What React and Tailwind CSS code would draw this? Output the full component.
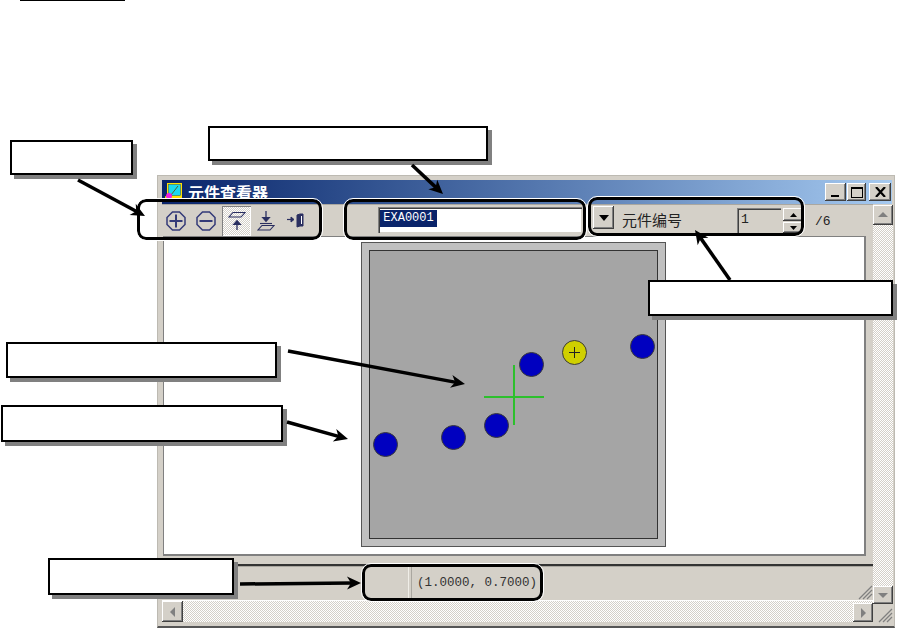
const raised = "bg-[#d4d0c8] shadow-[inset_-1px_-1px_0_#404040,inset_1px_1px_0_#fff,inset_-2px_-2px_0_#808080,inset_2px_2px_0_#d4d0c8]";
const dither = "bg-[repeating-conic-gradient(#d4d0c8_0_25%,#ffffff_0_50%)] bg-[length:2px_2px]";

function Callout({ cls }) {
  return <div className={"absolute bg-white border-2 border-black shadow-[4px_4px_0_#808080] " + cls} />;
}
function Ring({ cls }) {
  return <div className={"absolute rounded-[9px] border-[3px] border-black outline outline-1 outline-white " + cls} />;
}
function Dot({ x, y, color = "bg-[#0000c0]", children }) {
  return (
    <div
      className={"absolute w-[25px] h-[25px] rounded-full border border-[#3a3a3a] flex items-center justify-center " + color}
      style={{ left: x - 361 - 13, top: y - 242 - 13 }}
    >
      {children}
    </div>
  );
}
function Arrows() {
  const arrow = [
    [78, 180, 145, 216],
    [412, 165, 443, 194],
    [730, 280, 695, 230],
    [288, 351, 465, 384],
    [287, 422, 348, 439],
    [240, 584, 361, 583],
  ];
  return (
    <svg className="absolute left-0 top-0 pointer-events-none" width="902" height="630">
      {arrow.map(([a, b, c, d], i) => {
        const ang = Math.atan2(d - b, c - a);
        const deg = (ang * 180) / Math.PI;
        const len = Math.hypot(c - a, d - b);
        return (
          <g key={i} transform={`translate(${a} ${b}) rotate(${deg})`}>
            <line x1="0" y1="0" x2={len - 9} y2="0" stroke="#000" strokeWidth="3.500" />
            <path d={`M${len} 0 L${len - 14} -6.500 L${len - 10} 0 L${len - 14} 6.500 Z`} fill="#000" />
          </g>
        );
      })}
    </svg>
  );
}
function ZoomIcon({ minus }) {
  return (
    <svg width="20" height="20" viewBox="0 0 20 20" fill="none" stroke="#333a78" strokeWidth="1.500">
      <path d="M6.500 1h7L19 6.500v7L13.500 19h-7L1 13.500v-7z" />
      <path d="M3.500 10h13" strokeWidth="2" />
      {!minus && <path d="M10 3.500v13" strokeWidth="2" />}
    </svg>
  );
}
function UpIcon() {
  return (
    <svg width="18" height="22" viewBox="0 0 18 22" fill="none" stroke="#2a2f60" strokeWidth="1.100">
      <path d="M5 2.500h12L13 7H1z" />
      <path d="M9 11v9" strokeWidth="1.300" />
      <path d="M5.500 14.500L9 10.500l3.500 4z" fill="#2a2f60" />
    </svg>
  );
}
function DownIcon() {
  return (
    <svg width="18" height="22" viewBox="0 0 18 22" fill="none" stroke="#2a2f60" strokeWidth="1.100">
      <path d="M5 15.500h12L13 20H1z" />
      <path d="M9 1v10" strokeWidth="1.300" />
      <path d="M5.500 7.500L9 11.500 12.500 7.500z" fill="#2a2f60" />
      <path d="M3 13.500h12" />
    </svg>
  );
}
function ExitIcon() {
  return (
    <svg width="18" height="16" viewBox="0 0 18 16" fill="none" stroke="#2a2f60">
      <path d="M0 6.500h6" strokeWidth="1.200" />
      <path d="M4 4l3 2.500L4 9z" fill="#2a2f60" />
      <path d="M10 2l3-1h3v12h-3l-3 1z" fill="#2a2f60" />
      <path d="M14 3h1v8h-1z" fill="#fff" stroke="none" />
    </svg>
  );
}
function AppIcon() {
  return (
    <svg width="18" height="19" viewBox="0 0 18 19">
      <rect x="2" y="0" width="15" height="15" fill="#ffe000" />
      <rect x="3.500" y="1.500" width="12" height="11" fill="#19d8f0" stroke="#205060" strokeWidth="0.500" />
      <path d="M6 12L13 3" stroke="#506030" strokeWidth="1" />
      <rect x="0" y="13" width="16" height="6" rx="1" fill="#ffe000" />
      <circle cx="4" cy="13" r="3" fill="#f020e0" />
      <path d="M9 16.500h5" stroke="#000" />
    </svg>
  );
}
function Grip({ cls }) {
  return (
    <svg className={cls} width="15" height="15" viewBox="0 0 15 15" stroke="#808080" strokeWidth="1.300">
      <path d="M14 1L1 14M14 5L5 14M14 9L9 14" />
    </svg>
  );
}
function ArrowBtn({ cls, d }) {
  return (
    <div className={"flex items-center justify-center shrink-0 " + raised + " " + cls}>
      <svg width="10" height="10" viewBox="0 0 10 10"><path d={d} fill="#808080" /></svg>
    </div>
  );
}
function CapBtn({ w, children }) {
  return <div className={"h-[18px] flex items-center justify-center " + w + " " + raised}>{children}</div>;
}

export default function App() {
  return (
    <div className="relative w-[902px] h-[630px] bg-white overflow-hidden pl-[157px] pt-[175px] font-['Liberation_Sans',sans-serif]">
      <div className="absolute left-[20px] top-0 w-[105px] h-[1px] bg-black" />

      {/* window */}
      <div className="w-[738px] h-[453px] bg-[#d4d0c8] border border-[#bdbab2] border-b-2 border-b-[#555] pl-[4px] pr-[1px] pt-[4px] flex flex-col">
        <div className="h-[24px] shrink-0 flex items-center mr-[1px] pl-[3px] bg-gradient-to-r from-[#0a246a] to-[#a6caf0]">
          <AppIcon />
          <span className="ml-[5px] text-white font-bold text-[16px] leading-[20px] font-['Noto_Sans_CJK_SC',sans-serif]">元件查看器</span>
          <div className="ml-auto flex items-center pr-[1px]">
            <CapBtn w="w-[21px]"><div className="w-[8px] h-[2px] bg-black mt-[8px] -ml-[2px]" /></CapBtn>
            <div className="ml-[1px]">
              <CapBtn w="w-[19px]"><div className="w-[12px] h-[11px] border border-black border-t-2" /></CapBtn>
            </div>
            <div className="ml-[3px]">
              <CapBtn w="w-[22px]">
                <svg width="11" height="10" viewBox="0 0 11 10" stroke="#000" strokeWidth="2.200"><path d="M1 0l9 10M10 0L1 10" /></svg>
              </CapBtn>
            </div>
          </div>
        </div>

        <div className="flex-1 flex min-h-0">
          <div className="w-[711px] flex flex-col relative">
            {/* toolbar */}
            <div className="h-[32px] shrink-0 flex items-center relative border-t border-t-[#aaa7a0]">
              <div className="w-[61px] flex items-center pl-[4px] gap-[10px]">
                <ZoomIcon />
                <ZoomIcon minus />
              </div>
              <div className={"w-[29px] h-[30px] flex items-center justify-center -ml-[1px] shadow-[inset_1px_1px_0_#808080,inset_-1px_-1px_0_#fff] " + dither}>
                <UpIcon />
              </div>
              <div className="w-[30px] flex justify-center"><DownIcon /></div>
              <div className="w-[30px] flex justify-center"><ExitIcon /></div>

              <div className="absolute left-[216px] top-[2px] w-[204px] h-[26px] bg-white shadow-[inset_1px_1px_0_#808080,inset_2px_2px_0_#404040,inset_-1px_-1px_0_#d4d0c8] pl-[2px] pt-[3px]">
                <span className="block w-[57px] h-[17px] bg-[#0a246a] text-white text-[12px] leading-[17px] text-center font-['Liberation_Mono',monospace]">EXA0001</span>
              </div>

              <div className={"absolute left-[431px] top-[1px] w-[21px] h-[23px] flex items-center justify-center " + raised}>
                <svg width="10" height="6" viewBox="0 0 10 6"><path d="M0 0h10L5 6z" fill="#000" /></svg>
              </div>
              <span className="absolute left-[460px] top-[5px] text-[15px] leading-[20px] text-[#222] font-['Noto_Sans_CJK_SC',sans-serif]">元件编号</span>
              <div className="absolute left-[575px] top-[3px] w-[44px] h-[25px] bg-[#d4d0c8] shadow-[inset_1px_1px_0_#808080,inset_2px_2px_0_#404040] pl-[4px] pt-[3px] text-[13px] leading-[18px] text-[#222] font-['Liberation_Mono',monospace]">1</div>
              <div className="absolute left-[621px] top-[3px] w-[20px] flex flex-col gap-[1px]">
                <div className={"h-[13px] flex items-center justify-center " + raised}>
                  <svg width="7" height="4" viewBox="0 0 7 4"><path d="M0 4h7L3.500 0z" fill="#000" /></svg>
                </div>
                <div className={"h-[11px] flex items-center justify-center " + raised}>
                  <svg width="7" height="4" viewBox="0 0 7 4"><path d="M0 0h7L3.500 4z" fill="#000" /></svg>
                </div>
              </div>
              <span className="absolute left-[653px] top-[9px] text-[13px] leading-[16px] text-[#222] font-['Liberation_Mono',monospace]">/6</span>
            </div>

            {/* client area */}
            <div className="h-[320px] shrink-0 ml-[1px] w-[703px] bg-white border-l border-t border-b-2 border-r-2 border-[#808080] relative pl-[197px] pt-[5px]">
              <div className="relative w-[305px] h-[305px] border border-[#555] bg-[#c0c0c0] p-[7px]">
                <div className="w-full h-full border border-[#333] bg-[#a5a5a5]" />
                <div className="absolute left-[122px] top-[153px] w-[60px] h-[2px] bg-[#2cc02c]" />
                <div className="absolute left-[151px] top-[122px] w-[2px] h-[60px] bg-[#2cc02c]" />
                <Dot x={385} y={444} />
                <Dot x={453} y={437} />
                <Dot x={496} y={425} />
                <Dot x={531} y={364} />
                <Dot x={642} y={346} />
                <Dot x={574} y={352} color="bg-[#d0d000]">
                  <svg width="11" height="11" viewBox="0 0 11 11" stroke="#222" strokeWidth="1"><path d="M5.500 0v11M0 5.500h11" /></svg>
                </Dot>
              </div>
            </div>

            <div className="h-[10px] shrink-0 border-b-2 border-b-[#333]" />

            {/* status bar */}
            <div className="h-[34px] shrink-0 relative flex border-t border-t-[#aaa7a0]">
              <div className="w-[246px] shrink-0" />
              <div className="w-[4px] shrink-0 border-l border-[#f0eee8] border-r border-r-[#aaa7a0]" />
              <span className="pl-[5px] pt-[7px] text-[12.500px] leading-[18px] text-[#333] whitespace-pre font-['Liberation_Mono',monospace]">(1.0000, 0.7000)</span>
              <Grip cls="absolute right-0 bottom-0" />
            </div>

            {/* h scrollbar */}
            <div className={"h-[22px] shrink-0 flex items-stretch border-t border-t-white " + dither}>
              <ArrowBtn cls="w-[21px]" d="M7 0v10L2 5z" />
              <div className="flex-1" />
              <ArrowBtn cls="w-[20px] mt-[2px]" d="M3 0v10l5-5z" />
            </div>
          </div>

          {/* v scrollbar */}
          <div className="w-[20px] flex flex-col pt-[1px]">
            <ArrowBtn cls="h-[20px]" d="M5 2L0 7h10z" />
            <div className={"flex-1 " + dither} />
            <ArrowBtn cls="h-[18px]" d="M0 3h10L5 8z" />
            <div className="h-[22px] shrink-0 flex items-end justify-end pb-[3px]">
              <Grip />
            </div>
          </div>
        </div>
      </div>

      {/* annotations */}
      <Callout cls="left-[10px] top-[140px] w-[123px] h-[35px]" />
      <Callout cls="left-[208px] top-[126px] w-[280px] h-[35px]" />
      <Callout cls="left-[648px] top-[280px] w-[245px] h-[36px]" />
      <Callout cls="left-[6px] top-[342px] w-[271px] h-[36px]" />
      <Callout cls="left-[1px] top-[405px] w-[282px] h-[37px]" />
      <Callout cls="left-[48px] top-[558px] w-[186px] h-[37px]" />
      <Ring cls="left-[137px] top-[199px] w-[185px] h-[41px]" />
      <Ring cls="left-[344px] top-[199px] w-[242px] h-[41px]" />
      <Ring cls="left-[588px] top-[197px] w-[216px] h-[39px]" />
      <Ring cls="left-[362px] top-[564px] w-[181px] h-[37px]" />
      <Arrows />
    </div>
  );
}
